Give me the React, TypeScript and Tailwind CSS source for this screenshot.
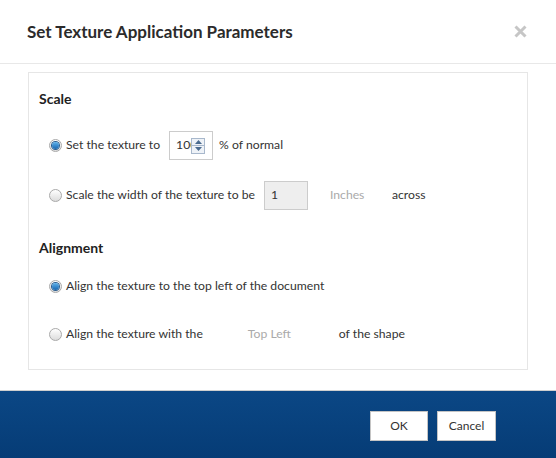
function Radio({ checked }: { checked?: boolean }) {
  return (
    <span className="flex h-[13px] w-[13px] shrink-0 items-center justify-center rounded-full border border-[#a9a9a9] bg-gradient-to-b from-[#ffffff] to-[#dcdcdc]">
      {checked && (
        <span className="h-[7px] w-[7px] rounded-full bg-gradient-to-b from-[#5fb3ec] to-[#1566b0] shadow-[0_0_0_1px_#2a5d8f]" />
      )}
    </span>
  );
}

function Spinner() {
  return (
    <span className="absolute right-[7px] top-[6px] flex h-[16px] w-[14px] flex-col border border-[#a8b8cc] bg-[#eef2f7]">
      <span className="flex flex-1 items-center justify-center border-b border-[#a8b8cc]">
        <svg width="7" height="4" viewBox="0 0 7 4">
          <path d="M0 4 L3.5 0 L7 4 Z" fill="#4a6a8e" />
        </svg>
      </span>
      <span className="flex flex-1 items-center justify-center">
        <svg width="7" height="4" viewBox="0 0 7 4">
          <path d="M0 0 L3.5 4 L7 0 Z" fill="#4a6a8e" />
        </svg>
      </span>
    </span>
  );
}

export default function App() {
  return (
    <div
      className="flex h-[458px] w-[556px] flex-col bg-white text-[12.2px] text-[#333333]"
      style={{ fontFamily: "Lato, 'Noto Sans', sans-serif" }}
    >
      <header className="flex h-[64px] shrink-0 items-center justify-between border-b border-[#e8e8e8] pl-[27px] pr-[29px]">
        <h1 className="text-[17px] font-bold text-[#2b2b2b]">Set Texture Application Parameters</h1>
        <svg width="13" height="13" viewBox="0 0 13 13">
          <path d="M1.5 1.5 L11.5 11.5 M11.5 1.5 L1.5 11.5" stroke="#c6c6c6" strokeWidth="3" />
        </svg>
      </header>

      <div className="flex-1 px-[28px] pt-[8px]">
        <div className="h-[298px] border border-[#e6e6e6] pl-[10px] pt-[15px]">
          <h2 className="flex h-[20px] items-center text-[14px] font-bold text-[#222222]">Scale</h2>

          <div className="mt-[22px] flex h-[30px] items-center pl-[10px]">
            <Radio checked />
            <span className="ml-[4px]">Set the texture to</span>
            <span className="relative ml-[9px] flex h-[29px] w-[44px] items-center border border-[#cccccc] pl-[6px]">
              <span className="w-[18px] overflow-hidden whitespace-nowrap">100</span>
              <Spinner />
            </span>
            <span className="ml-[6px]">% of normal</span>
          </div>

          <div className="mt-[20px] flex h-[30px] items-center pl-[10px]">
            <Radio />
            <span className="ml-[4px]">Scale the width of the texture to be</span>
            <span className="ml-[9px] flex h-[29px] w-[44px] items-center border border-[#cccccc] bg-[#eeeeee] pl-[6px]">
              1
            </span>
            <span className="ml-[22px] w-[62px] text-[#aaaaaa]">Inches</span>
            <span>across</span>
          </div>

          <h2 className="mt-[27px] flex h-[20px] items-center text-[14px] font-bold text-[#222222]">Alignment</h2>

          <div className="mt-[14px] flex h-[30px] items-center pl-[10px]">
            <Radio checked />
            <span className="ml-[4px]">Align the texture to the top left of the document</span>
          </div>

          <div className="mt-[18px] flex h-[30px] items-center pl-[10px]">
            <Radio />
            <span className="ml-[4px]">Align the texture with the</span>
            <span className="ml-[45px] w-[91px] text-[#aaaaaa]">Top Left</span>
            <span>of the shape</span>
          </div>
        </div>
      </div>

      <footer className="flex h-[68px] shrink-0 justify-end gap-[9px] border-t border-[#cfcfcf] bg-gradient-to-b from-[#0b4785] to-[#063c76] pr-[60px] pt-[20px]">
        <button className="h-[30px] w-[58px] border border-[#c4c4c4] bg-white text-[12px] text-[#333333]">OK</button>
        <button className="h-[30px] w-[59px] border border-[#c4c4c4] bg-white text-[12px] text-[#333333]">Cancel</button>
      </footer>
    </div>
  );
}
